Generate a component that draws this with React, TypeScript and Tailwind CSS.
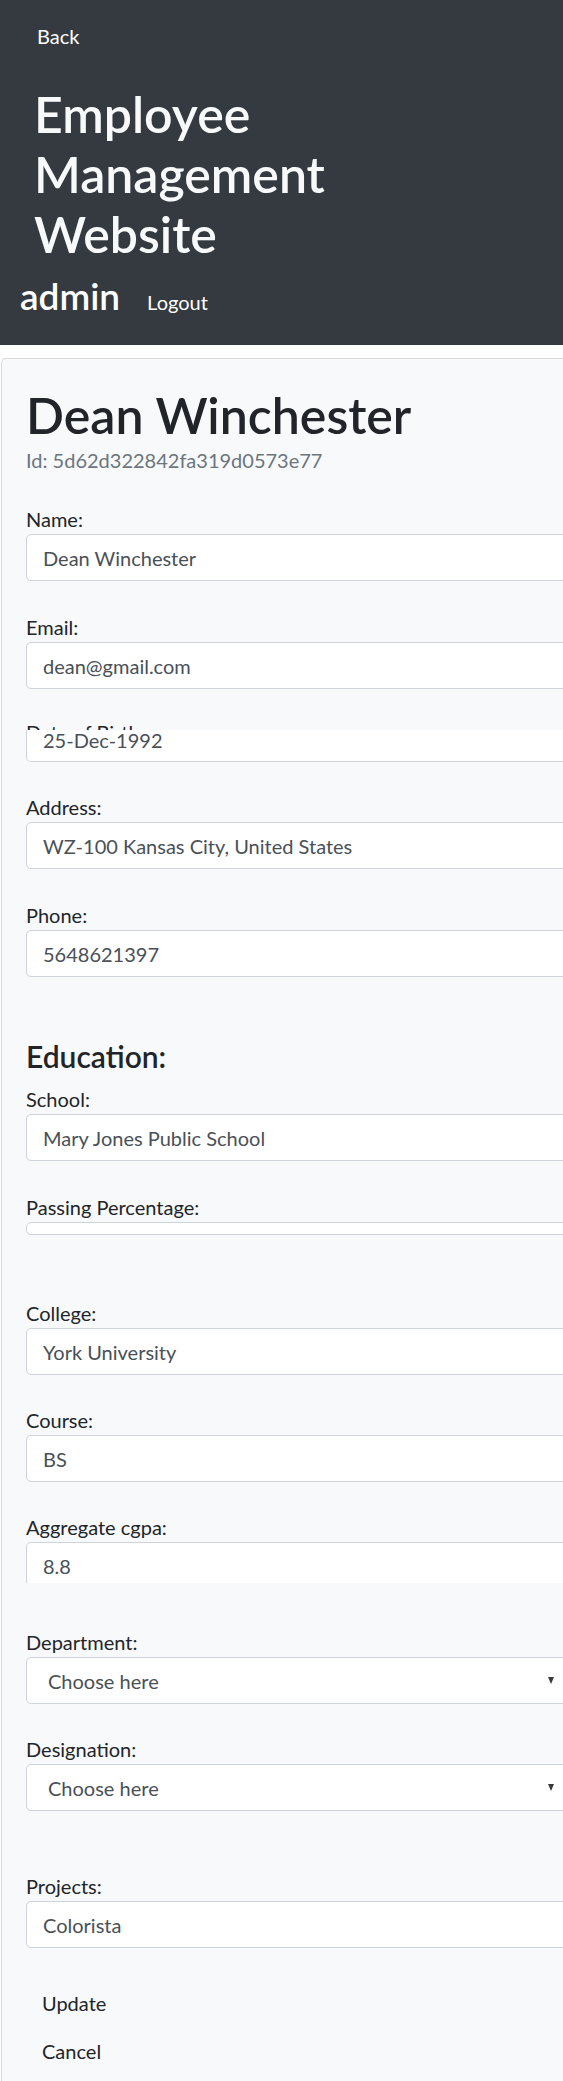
import React from 'react';

const font = { fontFamily: 'Lato, "Open Sans", sans-serif' };

function Label({ text, className = '' }: { text: string; className?: string }) {
  return <div className={`text-[20px] leading-[30px] text-[#212529] ${className}`}>{text}</div>;
}

function Field({ value }: { value: string }) {
  return (
    <div className="h-[47px] bg-white border border-[#ced4da] rounded-[5px] pl-[16px] pt-[8px] text-[20px] leading-[30px] text-[#495057]">
      {value}
    </div>
  );
}

function SelectBox() {
  return (
    <div className="h-[47px] bg-white border border-[#ced4da] rounded-[5px] pl-[21px] pr-[20px] pt-[8px] flex justify-between text-[20px] leading-[30px] text-[#495057]">
      <span>Choose here</span>
      <svg width="6" height="7" viewBox="0 0 6 7" className="mt-[11px]">
        <polygon points="0,0 6,0 3,7" fill="#3a3a3a" />
      </svg>
    </div>
  );
}

export default function App() {
  return (
    <div className="w-full h-screen overflow-hidden bg-white" style={font}>
      <div className="w-[600px]">
        {/* Header */}
        <div className="bg-[#343a40] h-[345px] pt-[21px]">
          <div className="pl-[37px] text-[20px] leading-[30px] text-white">Back</div>
          <h1 className="mt-[33px] ml-[34px] w-[360px] text-[50px] leading-[60px] font-semibold text-[#f8f9fa]">
            Employee Management Website
          </h1>
          <div className="mt-[10px] pl-[20px] flex items-baseline gap-[27px]">
            <span className="text-[37px] leading-[43px] font-semibold text-white">admin</span>
            <span className="text-[20px] leading-[30px] text-white">Logout</span>
          </div>
        </div>

        {/* Card */}
        <div className="mt-[13px] ml-[1px] w-[599px] bg-[#f8f9fa] border border-[rgba(0,0,0,0.125)] rounded-[5px] px-[24px] pt-[26px] pb-[25px]">
          <h1 className="text-[50px] leading-[60px] font-semibold text-[#212529]">Dean Winchester</h1>
          <div className="text-[20px] leading-[30px] text-[#6c757d]">Id: 5d62d322842fa319d0573e77</div>

          <Label text="Name:" className="mt-[29px]" />
          <Field value="Dean Winchester" />

          <Label text="Email:" className="mt-[31px]" />
          <Field value="dean@gmail.com" />

          {/* Date of birth - label is partly covered by the input */}
          <div className="mt-[28px] h-[13px] overflow-hidden">
            <Label text="Date of Birth:" />
          </div>
          <div className="h-[32px] bg-white border-x border-b border-[#ced4da] rounded-b-[5px] pl-[16px] text-[20px] leading-[20px] text-[#495057]">
            25-Dec-1992
          </div>

          <Label text="Address:" className="mt-[30px]" />
          <Field value="WZ-100 Kansas City, United States" />

          <Label text="Phone:" className="mt-[31px]" />
          <Field value="5648621397" />

          <h4 className="mt-[61px] mb-[10px] text-[30px] leading-[36px] font-semibold text-[#212529]">Education:</h4>

          <Label text="School:" />
          <Field value="Mary Jones Public School" />

          <Label text="Passing Percentage:" className="mt-[31px]" />
          <div className="h-[13px] bg-white border border-[#ced4da] rounded-[5px]" />

          <Label text="College:" className="mt-[63px]" />
          <Field value="York University" />

          <Label text="Course:" className="mt-[30px]" />
          <Field value="BS" />

          <Label text="Aggregate cgpa:" className="mt-[30px]" />
          <div className="h-[41px] bg-white border-x border-t border-[#ced4da] rounded-t-[5px] pl-[16px] pt-[8px] text-[20px] leading-[30px] text-[#495057]">
            8.8
          </div>

          <Label text="Department:" className="mt-[44px]" />
          <SelectBox />

          <Label text="Designation:" className="mt-[30px]" />
          <SelectBox />

          <Label text="Projects:" className="mt-[60px]" />
          <Field value="Colorista" />

          <div className="mt-[27px] flex flex-col items-start">
            <button className="h-[48px] px-[16px] pt-[8px] text-[20px] leading-[30px] text-[#212529] text-left">
              Update
            </button>
            <button className="h-[48px] px-[16px] pt-[8px] text-[20px] leading-[30px] text-[#212529] text-left">
              Cancel
            </button>
          </div>
        </div>
      </div>
    </div>
  );
}
